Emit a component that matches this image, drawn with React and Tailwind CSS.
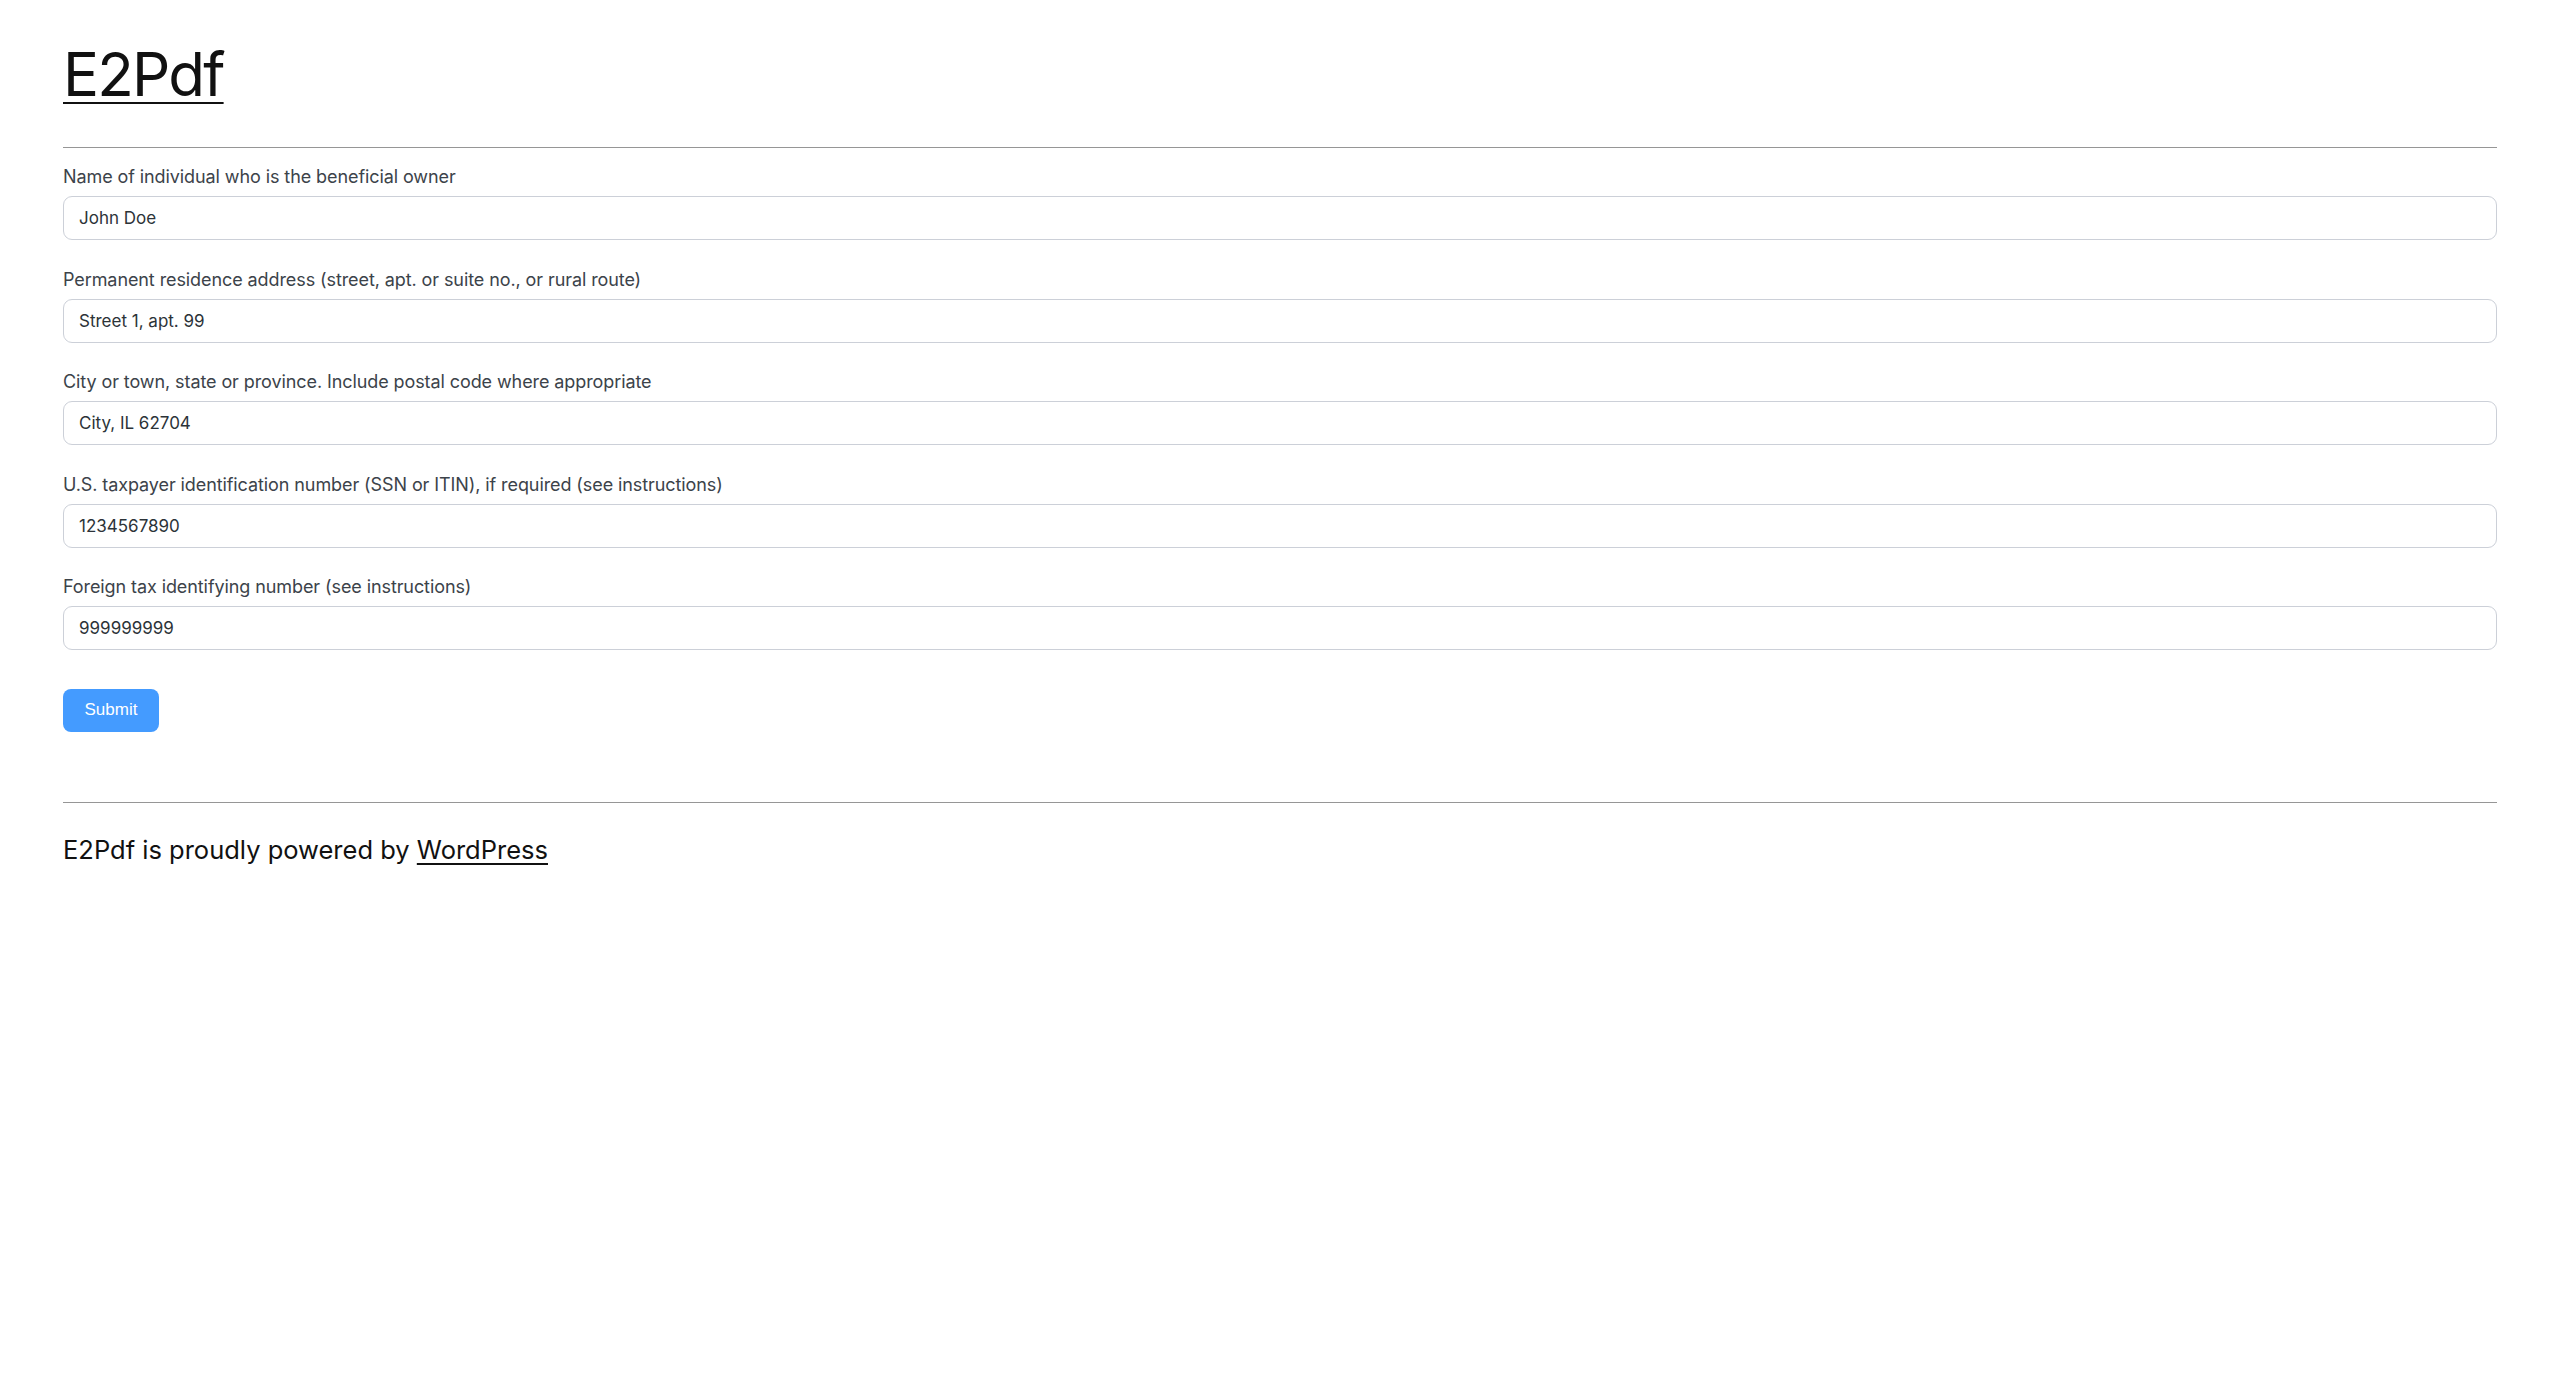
import React from "react";

const fields = [
  { id: "owner", label: "Name of individual who is the beneficial owner", value: "John Doe" },
  { id: "address", label: "Permanent residence address (street, apt. or suite no., or rural route)", value: "Street 1, apt. 99" },
  { id: "city", label: "City or town, state or province. Include postal code where appropriate", value: "City, IL 62704" },
  { id: "tin", label: "U.S. taxpayer identification number (SSN or ITIN), if required (see instructions)", value: "1234567890" },
  { id: "foreign", label: "Foreign tax identifying number (see instructions)", value: "999999999" },
];

function Field({ id, label, value }) {
  return (
    <div className="mb-[24.5px]">
      <label
        htmlFor={id}
        className="block text-[18px] leading-[29px] tracking-[-0.005em] text-[#3c434a]"
      >
        {label}
      </label>
      <input
        id={id}
        type="text"
        defaultValue={value}
        className="mt-[5px] block h-[44px] w-full rounded-[9px] border border-[#ccd0d8] bg-white px-[15px] text-[17px] tracking-normal text-[#2c3338] outline-none"
      />
    </div>
  );
}

export default function App() {
  return (
    <div
      className="min-h-screen bg-white px-[63px] text-[#111]"
      style={{ fontFamily: "Inter, 'Noto Sans', sans-serif" }}
    >
      <header className="pt-[38px]">
        <a
          href="#"
          className="text-[60px] leading-[72px] font-normal tracking-[-0.03em] text-[#111] underline decoration-[1.5px] underline-offset-[6px]"
        >
          E2Pdf
        </a>
      </header>

      <hr className="mt-[37px] border-0 border-t border-[#969696]" />

      <form className="pt-[14px]" onSubmit={(e) => e.preventDefault()}>
        {fields.map((f) => (
          <Field key={f.id} {...f} />
        ))}
        <button
          type="submit"
          className="mt-[14px] h-[43px] w-[96px] rounded-[8px] bg-[#449bff] text-[17px] text-white"
          style={{ fontFamily: "'Liberation Sans', Arial, sans-serif" }}
        >
          Submit
        </button>
      </form>

      <hr className="mt-[70px] border-0 border-t border-[#969696]" />

      <footer className="pt-[28px]">
        <p className="text-[25.5px] leading-[38px] tracking-normal text-[#111]">
          E2Pdf is proudly powered by{" "}
          <a href="#" className="underline decoration-[1.5px] underline-offset-[4px]">
            WordPress
          </a>
        </p>
      </footer>
    </div>
  );
}
